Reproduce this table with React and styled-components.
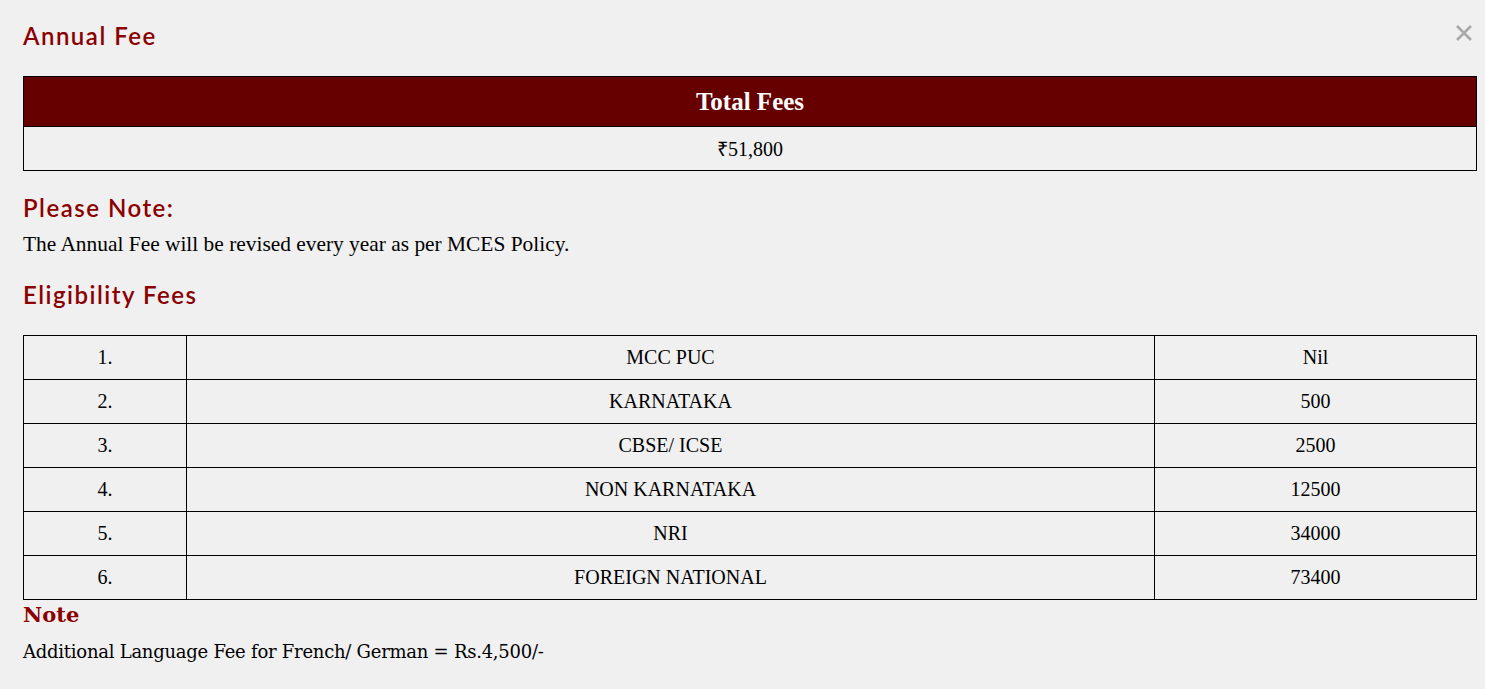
import React from 'react';
import styled, { createGlobalStyle } from 'styled-components';

const GlobalStyle = createGlobalStyle`
  html, body {
    margin: 0;
    padding: 0;
    background: #f0f0f0;
  }
`;

const Modal = styled.div`
  position: relative;
  padding: 21px 8px 0 23px;
  font-family: 'Liberation Serif', 'Times New Roman', serif;
  color: #000;
`;

const Heading = styled.h3`
  margin: ${props => props.margin || '0'};
  font-family: 'Lato', 'Noto Sans', sans-serif;
  font-weight: 600;
  font-size: 24px;
  letter-spacing: 1.5px;
  line-height: 30px;
  color: #8b0000;
`;

const NoteHeading = styled.h3`
  margin: 0;
  font-family: 'DejaVu Serif', Georgia, serif;
  font-weight: bold;
  font-size: 21px;
  line-height: 30px;
  color: #8b0000;
`;

const Close = styled.button`
  position: absolute;
  top: 24px;
  right: 12px;
  border: none;
  background: none;
  padding: 0;
  cursor: pointer;
  line-height: 0;
`;

const Table = styled.table`
  width: 1454px;
  border-collapse: collapse;
  margin: ${props => props.margin || '0'};
`;

const HeadCell = styled.th`
  background: #660000;
  color: #fff;
  border: 1px solid #000;
  height: 49px;
  padding: 0;
  font-size: 25px;
  font-weight: bold;
  text-align: center;
`;

const Cell = styled.td`
  border: 1px solid #000;
  height: 43px;
  padding: 0;
  font-size: 20px;
  text-align: center;
  width: ${props => props.width || 'auto'};
`;

const Text = styled.p`
  margin: ${props => props.margin || '0'};
  font-size: 21.4px;
  line-height: 26px;
`;

const LanguageText = styled.p`
  margin: ${props => props.margin || '0'};
  font-family: 'DejaVu Serif', Georgia, serif;
  font-size: 18px;
  letter-spacing: -0.25px;
  line-height: 26px;
`;

const rows = [
  ['1.', 'MCC PUC', 'Nil'],
  ['2.', 'KARNATAKA', '500'],
  ['3.', 'CBSE/ ICSE', '2500'],
  ['4.', 'NON KARNATAKA', '12500'],
  ['5.', 'NRI', '34000'],
  ['6.', 'FOREIGN NATIONAL', '73400'],
];

const App = () => (
  <>
    <GlobalStyle />
    <Modal>
      <Heading>Annual Fee</Heading>
      <Close aria-label="Close">
        <svg width="18" height="18" viewBox="0 0 18 18">
          <path d="M2 2 L16 16 M16 2 L2 16" stroke="#a8a8a8" strokeWidth="2.6" />
        </svg>
      </Close>

      <Table margin="25px 0 0 0">
        <thead>
          <tr>
            <HeadCell>Total Fees</HeadCell>
          </tr>
        </thead>
        <tbody>
          <tr>
            <Cell>₹51,800</Cell>
          </tr>
        </tbody>
      </Table>

      <Heading margin="22px 0 0 0">Please Note:</Heading>
      <Text margin="8px 0 0 0">The Annual Fee will be revised every year as per MCES Policy.</Text>

      <Heading margin="23px 0 0 0">Eligibility Fees</Heading>

      <Table margin="25px 0 0 0">
        <tbody>
          {rows.map(([no, board, fee]) => (
            <tr key={no}>
              <Cell width="162px">{no}</Cell>
              <Cell width="967px">{board}</Cell>
              <Cell>{fee}</Cell>
            </tr>
          ))}
        </tbody>
      </Table>

      <NoteHeading>Note</NoteHeading>
      <LanguageText margin="9px 0 0 0">Additional Language Fee for French/ German = Rs.4,500/-</LanguageText>
    </Modal>
  </>
);

export default App;
